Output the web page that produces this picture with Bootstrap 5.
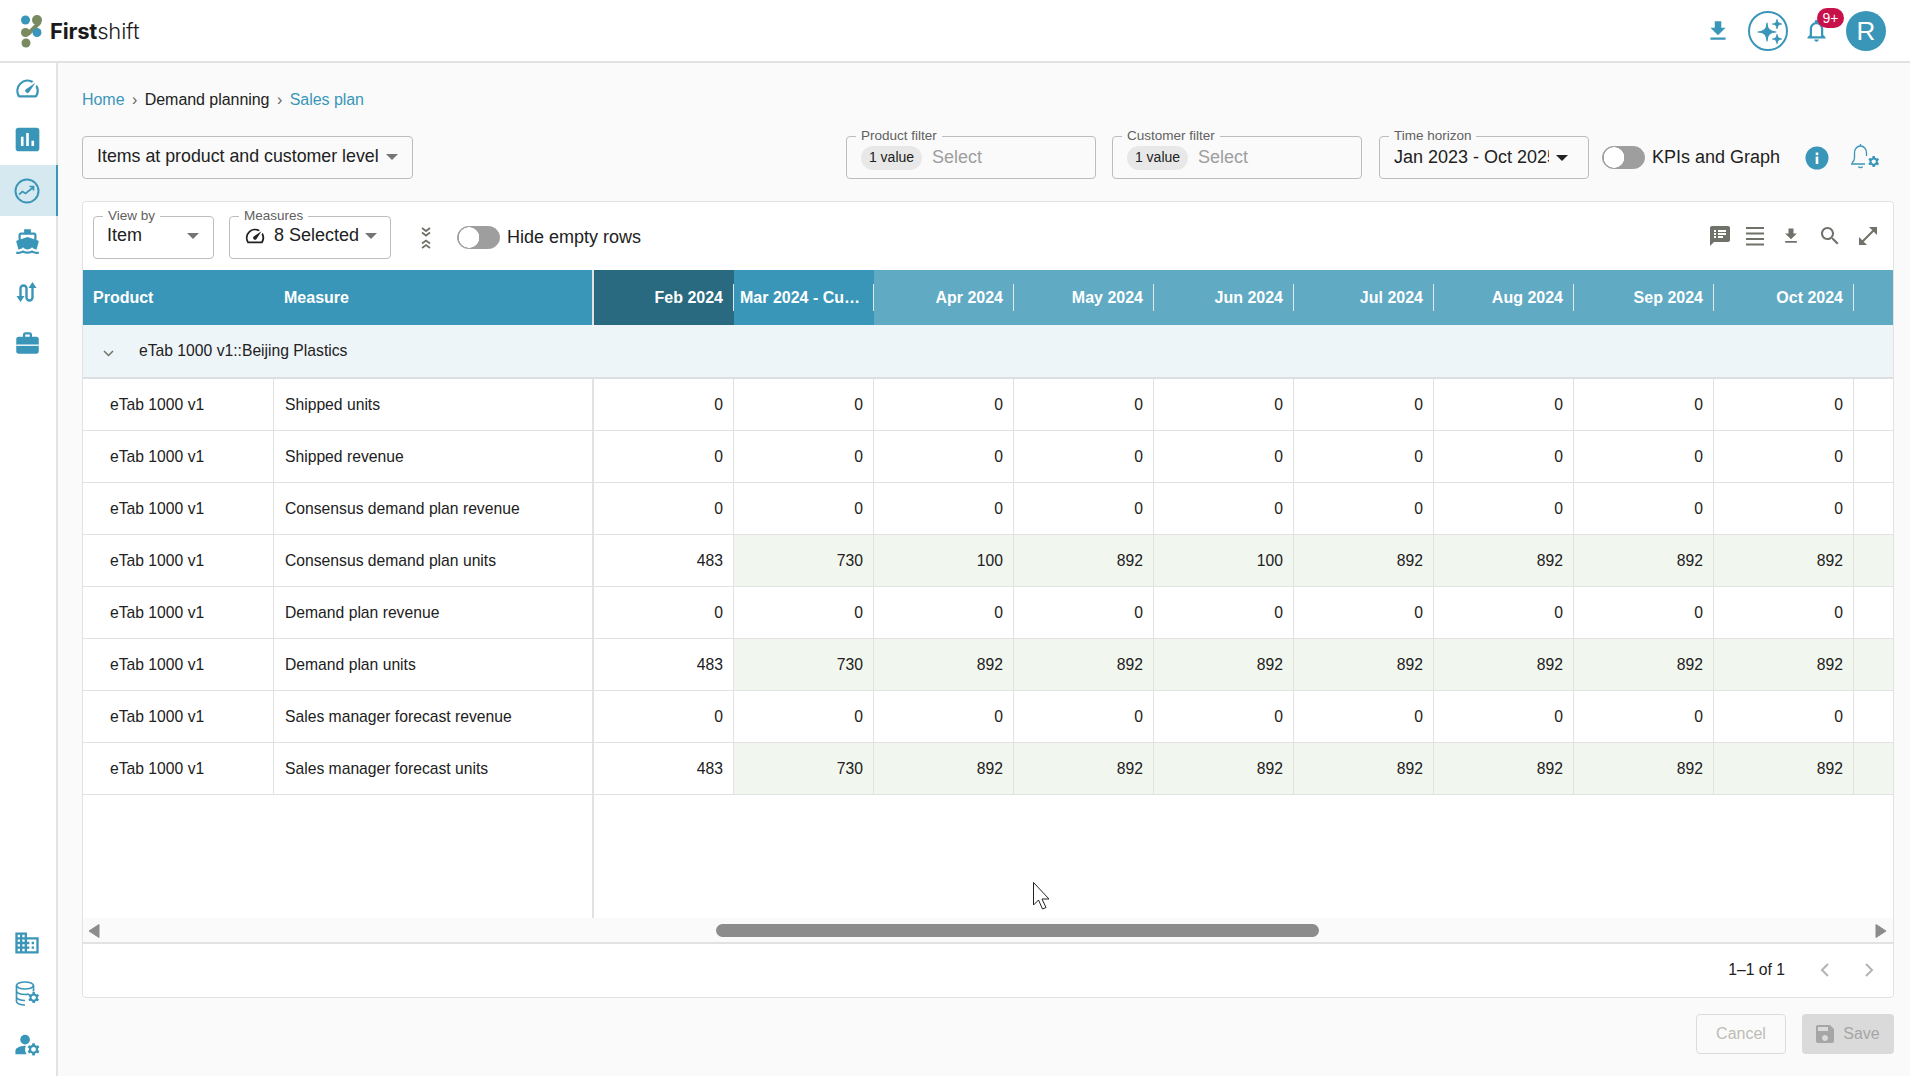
<!doctype html>
<html lang="en">
<head>
<meta charset="utf-8">
<title>Sales plan</title>
<link href="https://cdn.jsdelivr.net/npm/bootstrap@5.3.0/dist/css/bootstrap.min.css" rel="stylesheet">
<style>
html,body{height:100%;overflow:hidden}
body{font-family:"Liberation Sans",Arial,sans-serif;font-size:16px;color:#212121;background:#fafafa;display:flex;flex-direction:column}
.ico{fill:#3a96b8;display:block}
.ico-gray{fill:#6f7268;display:block}
.topbar{height:63px;flex:none;background:#fff;border-bottom:2px solid #e2e2e2;padding:0 24px 0 20px}
.brand{font-family:Inter,"Liberation Sans",sans-serif;font-size:22px;color:#1a1a1a;letter-spacing:-.2px;line-height:1;font-weight:300}
.brand b{font-weight:700}
.bell-wrap{position:relative;width:42px;height:40px;margin:0}
.bell-count{position:absolute;left:13px;top:-3px;width:27px;height:20px;border-radius:10px;background:#c8104b;color:#fff;font-size:14px;line-height:20px;text-align:center}
.avatar{width:40px;height:40px;border-radius:50%;background:#3a96b8;color:#fff;font-size:26px;line-height:40px;text-align:center}
.rail{width:58px;flex:none;background:#fff;border-right:2px solid #e2e2e2}
.rail-item{height:51px;display:flex;align-items:center;justify-content:center;width:56px;padding-right:2px}
.rail-item.on{background:#d6e9f0;box-shadow:2px 0 0 #3a96b8}
.workspace{flex:1;min-width:0;padding:25px 16px 23px 24px}
.crumbs{line-height:24px;margin:0 0 24px;font-size:16px;letter-spacing:-.05px;--bs-breadcrumb-divider:"›";--bs-breadcrumb-margin-bottom:24px}
.crumbs .breadcrumb-item+.breadcrumb-item{padding-left:7.5px}
.crumbs .breadcrumb-item+.breadcrumb-item::before{padding-right:7.5px;color:#666}
.crumbs a,.crumbs .active{color:#3a96b8;text-decoration:none}
.crumbs .mid{color:#212121}
.level-btn{height:43px;width:331px;background:#fafafa;border:1px solid #bdbdbd;border-radius:4px;color:#212121;font-size:17.8px;padding:0 14px 2px;text-align:left;white-space:nowrap;display:flex;align-items:center;justify-content:space-between}
.level-btn:hover{background:#fafafa;color:#212121;border-color:#bdbdbd}
.dropdown-toggle::after{border-top:.36em solid #757575;border-right:.36em solid transparent;border-left:.36em solid transparent;border-bottom:0;vertical-align:middle;margin-left:6px}
.fbox{position:relative;height:43px;border:1px solid #bdbdbd;border-radius:4px;display:flex;align-items:center;padding:0 14px}
.fbox>label{position:absolute;left:9px;top:-9px;font-size:13.5px;line-height:16px;color:#616161;padding:0 5px;background:#fafafa;white-space:nowrap}
.card-tool .fbox>label{background:#fff}
.chip{background:#e8e8e8;border-radius:12px;height:24px;line-height:23px;padding:0 8px;font-size:14px;margin-right:10px;white-space:nowrap}
.hint{color:#9e9e9e;font-size:18px}
.w-filter{width:250px}
.w-time{width:210px;font-size:18px;justify-content:space-between;white-space:nowrap}
.w-time span{width:155px;overflow:hidden;display:block}
.w-time.dropdown-toggle::after{border-top-color:#212121;margin-right:6px}
.sw{margin:0;min-height:0;padding:0;display:flex;align-items:center}
.sw .form-check-input{margin:0;width:43px;height:23px;border-radius:12px;border:1px solid #9e9e9e;background-color:#9e9e9e;background-image:radial-gradient(circle at 11px 50%,#fff 10px,transparent 10.5px);background-position:0 0;box-shadow:none}
.sw label{margin-left:7px;font-size:18px;white-space:nowrap}
.sheet{flex:1;min-height:0;border:1px solid #e2e2e2;border-radius:4px;background:#fff;margin-top:22px;display:flex;flex-direction:column;overflow:hidden}
.card-tool{height:68px;flex:none;padding:14px 10px 0 10px}
.w-view{width:121px;font-size:18px;padding:0 14px 4px 13px;justify-content:space-between}
.w-meas{width:162px;font-size:18px;padding-bottom:4px;justify-content:space-between}
.w-view.dropdown-toggle::after{margin-right:0}
.w-meas.dropdown-toggle::after{margin-right:2px}
.tools{margin-left:auto;padding-right:3px}
.grid-wrap{flex:none;overflow:hidden}
.plan{table-layout:fixed;width:1811px;border-collapse:separate;border-spacing:0;margin:0;font-size:15.7px;--bs-table-bg:transparent;--bs-table-color:#212121;--bs-table-border-color:transparent}
.plan>:not(caption)>*>*{padding:0 10px;vertical-align:middle;border-width:0}
.plan thead th{height:55px;color:#fff;font-size:16px;font-weight:700;background:#3a96b8;position:relative;white-space:nowrap;text-align:right;padding-right:11px}
.plan thead th.lft{text-align:left;padding-left:10px}
.plan thead th.past{background:#296a80}
.plan thead th.later{background:#60aac4}
.plan thead th.sep::after{content:"";position:absolute;right:0;top:14px;height:27px;width:1px;background:#dfe9ed}
.plan thead th.edge{border-right:2px solid #e2e2e2}
.plan .grp td{height:54px;background:#eef5f8;border-bottom:2px solid #dcdfe0;font-size:15.7px;padding-left:19px}
.plan .grp svg{display:inline-block;vertical-align:-3px;margin-right:24px}
.plan tbody .r td{height:52px;border-bottom:1px solid #e2e2e2;border-right:1px solid #e2e2e2;text-align:right}
.plan tbody .r td:nth-child(1){text-align:left;padding-left:27px}
.plan tbody .r td:nth-child(2){text-align:left;padding-left:11px;border-right:2px solid #e2e2e2}
.plan tbody .r td:last-child{border-right:0}
.plan tbody .r td.g{background:#f1f6ef}
.grid-rest{flex:1;min-height:0;position:relative}
.grid-rest>div{width:511px;height:100%;border-right:2px solid #e2e2e2}
.hscroll{height:24px;flex:none;background:#fafafa;position:relative;border-bottom:0}
.thumb{position:absolute;left:633px;top:6px;width:603px;height:13px;border-radius:7px;background:#8c8c8c}
.arrow-l{position:absolute;left:5px;top:6px}
.arrow-r{position:absolute;right:6px;top:6px}
.pager{height:55px;flex:none;border-top:2px solid #e2e2e2;padding:0 17px 2px 0;font-size:15.7px}
.pager span{margin-right:33px}
.pager svg+svg{margin-left:30px}
.acts{margin-top:16px;height:39px}
.btn-off{height:40px;border-radius:4px;font-size:16px;padding:0;display:flex;align-items:center;justify-content:center}
.btn-off.c{width:90px;border:1px solid #dcdcdc;color:#bdbdb5;background:transparent}
.btn-off.s{width:92px;border:0;background:#dadada;color:#a6a6a6;gap:9px}
.btn-off:disabled{opacity:1}
.btn-off.c:disabled{color:#bdbdb5;border-color:#dcdcdc;background:transparent}
.btn-off.s:disabled{color:#a6a6a6;background:#dadada}
.pointer{position:absolute;left:1033px;top:882px;z-index:5;pointer-events:none}
</style>
</head>
<body>
<svg width="0" height="0" class="position-absolute">
<symbol id="gear" viewBox="0 0 24 24"><path d="M20.75 16c0-.22-.03-.42-.06-.63l1.14-1.01-1-1.73-1.45.49c-.32-.27-.68-.48-1.08-.63L18 11h-2l-.3 1.49c-.4.15-.76.36-1.08.63l-1.45-.49-1 1.73 1.14 1.01c-.03.21-.06.41-.06.63s.03.42.06.63l-1.14 1.01 1 1.73 1.45-.49c.32.27.68.48 1.08.63L16 21h2l.3-1.49c.4-.15.76-.36 1.08-.63l1.45.49 1-1.73-1.14-1.01c.03-.21.06-.41.06-.63zM17 18c-1.1 0-2-.9-2-2s.9-2 2-2 2 .9 2 2-.9 2-2 2z"/></symbol>
<symbol id="dl" viewBox="0 0 24 24"><path d="M19 9h-4V3H9v6H5l7 7 7-7zM5 18v2h14v-2H5z"/></symbol>
<symbol id="speed" viewBox="0 0 24 24"><path d="M20.38 8.57l-1.23 1.85a8 8 0 0 1-.22 7.58H5.07A8 8 0 0 1 15.58 6.85l1.85-1.23A10 10 0 0 0 3.35 19a2 2 0 0 0 1.72 1h13.85a2 2 0 0 0 1.74-1 10 10 0 0 0-.27-10.44zm-9.79 6.84a2 2 0 0 0 2.83 0l5.66-8.49-8.49 5.66a2 2 0 0 0 0 2.83z"/></symbol>
</svg>
<svg class="pointer" width="20" height="28" viewBox="0 0 20 28"><path d="M.5.5V23l5-5 4 9 3.5-1.5-4-8.500h7z" fill="#fff" stroke="#222" stroke-width="1"/></svg>

<nav class="navbar topbar d-flex align-items-center justify-content-between flex-nowrap">
  <a class="d-flex align-items-center text-decoration-none" href="#">
    <svg width="26" height="34" viewBox="0 0 26 34">
      <path d="M8 20 L20 8" stroke="#7a8a60" stroke-width="4"/>
      <circle cx="5.500" cy="6" r="4.500" fill="#3a96b8"/>
      <circle cx="17" cy="6" r="5" fill="#7a8a60"/>
      <circle cx="5.500" cy="18.500" r="4.500" fill="#7a8a60"/>
      <circle cx="17" cy="18.500" r="4.500" fill="#3a96b8"/>
      <circle cx="6" cy="29" r="4.500" fill="#7a8a60"/>
    </svg>
    <span class="brand ms-1"><b>First</b>shift</span>
  </a>
  <div class="d-flex align-items-center">
    <svg class="ico" style="margin-right:17px" width="26" height="26" viewBox="0 0 24 24"><use href="#dl"/></svg>
    <svg width="40" height="40" viewBox="0 0 40 40"><circle cx="20" cy="20" r="19" fill="none" stroke="#3a96b8" stroke-width="2"/><path fill="#3a96b8" d="M19 12Q19 21 28 21Q19 21 19 30Q19 21 10 21Q19 21 19 12ZM29 8.500Q29 13 33.500 13Q29 13 29 17.500Q29 13 24.500 13Q29 13 29 8.500ZM29 23.500Q29 28 33.500 28Q29 28 29 32.500Q29 28 24.500 28Q29 28 29 23.500Z" stroke="#3a96b8" stroke-width="1.200" stroke-linejoin="round"/></svg>
    <div class="bell-wrap d-flex align-items-center" style="margin-left:16px">
      <svg class="ico" width="27" height="27" viewBox="0 0 24 24" style="margin-left:-1px"><path d="M12 22c1.100 0 2-.9 2-2h-4c0 1.100.9 2 2 2zm6-6v-5c0-3.070-1.630-5.640-4.500-6.320V4c0-.83-.67-1.500-1.500-1.500s-1.500.67-1.500 1.500v.68C7.640 5.360 6 7.920 6 11v5l-2 2v1h16v-1l-2-2zm-2 1H8v-6c0-2.480 1.510-4.500 4-4.500s4 2.020 4 4.500v6z"/></svg>
      <span class="bell-count">9+</span>
    </div>
    <div class="avatar">R</div>
  </div>
</nav>

<div class="d-flex flex-grow-1" style="min-height:0">
  <aside class="rail d-flex flex-column">
    <div class="rail-item"><svg class="ico" width="27" height="27" viewBox="0 0 24 24"><use href="#speed"/></svg></div>
    <div class="rail-item"><svg class="ico" width="25" height="25" viewBox="2.500 2.500 19 19"><path d="M19 3H5c-1.100 0-2 .9-2 2v14c0 1.100.9 2 2 2h14c1.100 0 2-.9 2-2V5c0-1.100-.9-2-2-2zM9 17H7v-7h2v7zm4 0h-2V7h2v10zm4 0h-2v-4h2v4z"/></svg></div>
    <div class="rail-item on"><svg width="26" height="26" viewBox="0 0 26 26" fill="none" stroke="#3a96b8" stroke-width="2"><circle cx="13" cy="13" r="11.500"/><path d="M5 16.500l3.500-3 3 2 7.500-6M15.500 8.500h4v4" stroke-width="1.700"/></svg></div>
    <div class="rail-item"><svg class="ico" width="27" height="27" viewBox="0 0 24 24"><path d="M20 21c-1.390 0-2.780-.47-4-1.320-2.440 1.710-5.560 1.710-8 0C6.780 20.530 5.390 21 4 21H2v2h2c1.380 0 2.740-.35 4-.99 2.520 1.290 5.480 1.290 8 0 1.260.65 2.620.99 4 .99h2v-2h-2zM3.950 19H4c1.600 0 3.020-.88 4-2 .98 1.120 2.400 2 4 2s3.020-.88 4-2c.98 1.120 2.400 2 4 2h.05l1.890-6.680c.08-.26.06-.54-.06-.78s-.34-.42-.6-.5L20 10.620V6c0-1.100-.9-2-2-2h-3V1H9v3H6c-1.100 0-2 .9-2 2v4.620l-1.290.42c-.26.08-.48.26-.6.5s-.15.52-.06.78L3.950 19zM6 6h12v3.970L12 8 6 9.970V6z"/></svg></div>
    <div class="rail-item"><svg width="24" height="24" viewBox="-1 0 24 24" fill="none" stroke="#3a96b8" stroke-width="2.400"><path d="M4.500 16V7.500a3 3 0 0 1 6 0v9a3 3 0 0 0 6 0V6"/><path d="M.5 15h8l-4 6zM12.500 7h8l-4-6z" fill="#3a96b8" stroke="none"/></svg></div>
    <div class="rail-item"><svg class="ico" width="27" height="27" viewBox="0 0 24 24"><path d="M20 6h-4V4c0-1.110-.89-2-2-2h-4c-1.110 0-2 .89-2 2v2H4c-1.110 0-1.990.89-1.990 2L2 19c0 1.110.89 2 2 2h16c1.110 0 2-.89 2-2V8c0-1.110-.89-2-2-2zm-6 0h-4V4h4v2z"/><path d="M2 13.500h20" stroke="#fff" stroke-width="1.200"/></svg></div>
    <div class="mt-auto"></div>
    <div class="rail-item"><svg class="ico" width="28" height="28" viewBox="0 0 24 24"><path d="M12 7V3H2v18h20V7H12zM6 19H4v-2h2v2zm0-4H4v-2h2v2zm0-4H4V9h2v2zm0-4H4V5h2v2zm4 12H8v-2h2v2zm0-4H8v-2h2v2zm0-4H8V9h2v2zm0-4H8V5h2v2zm10 12h-8v-2h2v-2h-2v-2h2v-2h-2V9h8v10zm-2-8h-2v2h2v-2zm0 4h-2v2h2v-2z"/></svg></div>
    <div class="rail-item"><svg width="28" height="27" viewBox="-1 0 28 27"><g fill="none" stroke="#3a96b8" stroke-width="1.700"><ellipse cx="11" cy="5.500" rx="8.500" ry="3.500"/><path d="M2.500 5.500v16c0 2 4 3.500 8.500 3.500M2.500 11c0 2 4 3.500 8.500 3.500 1.500 0 3-.2 4-.5M2.500 17c0 2 4 3.500 8.500 3.500M19.500 5.500v6"/></g><g fill="#3a96b8"><use href="#gear" x="1" y="0" width="26.400" height="26.400"/></g></svg></div>
    <div class="rail-item" style="margin-bottom:6px"><svg class="ico" width="29" height="29" viewBox="0 0 24 24"><circle cx="10" cy="8" r="4"/><path d="M10.670 13.020c-.22-.01-.44-.02-.67-.02-2.420 0-4.680.67-6.610 1.820-.88.52-1.390 1.500-1.390 2.530V20h9.260c-.79-1.130-1.260-2.510-1.260-4 0-1.070.25-2.070.67-2.980z"/><use href="#gear"/></svg></div>
  </aside>

  <main class="workspace d-flex flex-column">
    <ol class="breadcrumb crumbs">
      <li class="breadcrumb-item"><a href="#">Home</a></li>
      <li class="breadcrumb-item mid">Demand planning</li>
      <li class="breadcrumb-item active">Sales plan</li>
    </ol>

    <div class="d-flex align-items-center">
      <button class="btn dropdown-toggle level-btn" type="button">Items at product and customer level</button>
      <div class="d-flex align-items-center ms-auto">
        <div class="fbox w-filter"><label>Product filter</label><span class="chip">1 value</span><span class="hint">Select</span></div>
        <div class="fbox w-filter" style="margin-left:16px"><label>Customer filter</label><span class="chip">1 value</span><span class="hint">Select</span></div>
        <div class="fbox w-time dropdown-toggle" style="margin-left:17px"><label>Time horizon</label><span>Jan 2023 - Oct 2025</span></div>
        <div class="form-check form-switch sw" style="margin-left:13px"><input class="form-check-input" type="checkbox" id="kpi"><label for="kpi">KPIs and Graph</label></div>
        <svg style="margin-left:25px" width="24" height="24" viewBox="0 0 24 24"><circle cx="12" cy="12" r="11.500" fill="#3a96b8"/><rect x="10.700" y="10.500" width="2.600" height="7.500" fill="#fff"/><rect x="10.700" y="6.500" width="2.600" height="2.600" fill="#fff"/></svg>
        <svg style="margin-left:20px;margin-right:13px" width="32" height="32" viewBox="0 0 32 32"><g fill="none" stroke="#3a96b8" stroke-width="1.300"><path d="M3 21c1.500-1.500 2.500-2.500 2.500-5v-5c0-4 2.500-7 6-7s6 3 6 7v3M2 22h14M9.500 24.500c.5 1.500 3.500 1.500 4 0M11.500 4V2"/></g><g fill="#3a96b8"><use href="#gear" x="6" y="2" width="26.400" height="26.400"/></g></svg>
      </div>
    </div>

    <section class="card sheet">
      <div class="card-tool d-flex align-items-start">
        <div class="fbox w-view dropdown-toggle"><label>View by</label><span>Item</span></div>
        <div class="fbox w-meas dropdown-toggle" style="margin-left:15px"><label>Measures</label><span class="d-flex align-items-center gap-2"><svg width="22" height="22" viewBox="0 0 24 24" fill="#212121"><use href="#speed"/></svg>8 Selected</span></div>
        <svg style="margin:11px 0 0 28px" width="14" height="22" viewBox="0 0 14 22" fill="none" stroke="#6f7268" stroke-width="1.800"><path d="M3 1l4 3L11 1M3 5.500l4 3 4-3M3 16.500l4-3 4 3M3 21l4-3 4 3"/></svg>
        <div class="form-check form-switch sw" style="margin:7px 0 0 24px;height:28px"><input class="form-check-input" type="checkbox" id="hide"><label for="hide">Hide empty rows</label></div>
        <div class="tools d-flex align-items-center" style="margin-top:8px">
          <svg class="ico-gray" width="24" height="24" viewBox="0 0 24 24"><path d="M20 2H4c-1.100 0-1.990.9-1.990 2L2 22l4-4h14c1.100 0 2-.9 2-2V4c0-1.100-.9-2-2-2zM8 14H6v-2h2v2zm0-3H6V9h2v2zm0-3H6V6h2v2zm7 6h-5v-2h5v2zm3-3h-8V9h8v2zm0-3h-8V6h8v2z"/></svg>
          <svg style="margin-left:14px" width="18" height="20" viewBox="0 0 18 20" fill="#6f7268"><rect y="1" width="18" height="2"/><rect y="6.500" width="18" height="2"/><rect y="12" width="18" height="2"/><rect y="17.500" width="18" height="2"/></svg>
          <svg class="ico-gray" style="margin-left:17px" width="20" height="20" viewBox="0 0 24 24"><use href="#dl"/></svg>
          <svg class="ico-gray" style="margin-left:17px" width="24" height="24" viewBox="0 0 24 24"><path d="M15.500 14h-.79l-.28-.27C15.410 12.590 16 11.110 16 9.500 16 5.910 13.090 3 9.500 3S3 5.910 3 9.500 5.910 16 9.500 16c1.610 0 3.090-.59 4.230-1.570l.27.28v.79l5 4.990L20.490 19l-4.990-5zm-6 0C7.010 14 5 11.990 5 9.500S7.010 5 9.500 5 14 7.010 14 9.500 11.990 14 9.500 14z"/></svg>
          <svg class="ico-gray" style="margin-left:14px" width="24" height="24" viewBox="0 0 24 24"><path d="M21 11V3h-8l3.290 3.290-10 10L3 13v8h8l-3.290-3.290 10-10z"/></svg>
        </div>
      </div>

      <div class="grid-wrap">
        <table class="table plan">
          <colgroup><col style="width:191px"><col style="width:320px"><col style="width:140px"><col style="width:140px"><col style="width:140px"><col style="width:140px"><col style="width:140px"><col style="width:140px"><col style="width:140px"><col style="width:140px"><col style="width:140px"><col style="width:40px"></colgroup>
          <thead><tr>
            <th class="lft">Product</th><th class="lft edge">Measure</th>
            <th class="past sep">Feb 2024</th>
            <th class="sep lft" style="padding:0 6px">Mar 2024 - Cu…</th>
            <th class="later sep">Apr 2024</th><th class="later sep">May 2024</th><th class="later sep">Jun 2024</th><th class="later sep">Jul 2024</th><th class="later sep">Aug 2024</th><th class="later sep">Sep 2024</th><th class="later sep">Oct 2024</th><th class="later"></th>
          </tr></thead>
          <tbody>
            <tr class="grp"><td colspan="12"><svg width="13" height="12" viewBox="0 0 13 12" fill="none" stroke="#6f7268" stroke-width="1.500"><path d="M2 4l4.500 4.500L11 4"/></svg>eTab 1000 v1::Beijing Plastics</td></tr>
            <tr class="r"><td>eTab 1000 v1</td><td>Shipped units</td><td>0</td><td>0</td><td>0</td><td>0</td><td>0</td><td>0</td><td>0</td><td>0</td><td>0</td><td></td></tr>
            <tr class="r"><td>eTab 1000 v1</td><td>Shipped revenue</td><td>0</td><td>0</td><td>0</td><td>0</td><td>0</td><td>0</td><td>0</td><td>0</td><td>0</td><td></td></tr>
            <tr class="r"><td>eTab 1000 v1</td><td>Consensus demand plan revenue</td><td>0</td><td>0</td><td>0</td><td>0</td><td>0</td><td>0</td><td>0</td><td>0</td><td>0</td><td></td></tr>
            <tr class="r"><td>eTab 1000 v1</td><td>Consensus demand plan units</td><td>483</td><td class="g">730</td><td class="g">100</td><td class="g">892</td><td class="g">100</td><td class="g">892</td><td class="g">892</td><td class="g">892</td><td class="g">892</td><td class="g"></td></tr>
            <tr class="r"><td>eTab 1000 v1</td><td>Demand plan revenue</td><td>0</td><td>0</td><td>0</td><td>0</td><td>0</td><td>0</td><td>0</td><td>0</td><td>0</td><td></td></tr>
            <tr class="r"><td>eTab 1000 v1</td><td>Demand plan units</td><td>483</td><td class="g">730</td><td class="g">892</td><td class="g">892</td><td class="g">892</td><td class="g">892</td><td class="g">892</td><td class="g">892</td><td class="g">892</td><td class="g"></td></tr>
            <tr class="r"><td>eTab 1000 v1</td><td>Sales manager forecast revenue</td><td>0</td><td>0</td><td>0</td><td>0</td><td>0</td><td>0</td><td>0</td><td>0</td><td>0</td><td></td></tr>
            <tr class="r"><td>eTab 1000 v1</td><td>Sales manager forecast units</td><td>483</td><td class="g">730</td><td class="g">892</td><td class="g">892</td><td class="g">892</td><td class="g">892</td><td class="g">892</td><td class="g">892</td><td class="g">892</td><td class="g"></td></tr>
          </tbody>
        </table>
      </div>
      <div class="grid-rest"><div></div></div>
      <div class="hscroll">
        <svg class="arrow-l" width="12" height="14" viewBox="0 0 12 14"><path d="M11 .5v13L1 7z" fill="#8c8c8c" stroke="#8c8c8c" stroke-linejoin="round"/></svg>
        <div class="thumb"></div>
        <svg class="arrow-r" width="12" height="14" viewBox="0 0 12 14"><path d="M1 .5v13L11 7z" fill="#8c8c8c" stroke="#8c8c8c" stroke-linejoin="round"/></svg>
      </div>
      <div class="pager d-flex align-items-center justify-content-end">
        <span>1–1 of 1</span>
        <svg width="14" height="16" viewBox="0 0 14 16" fill="none" stroke="#b4b4b4" stroke-width="2"><path d="M10 2L4 8l6 6"/></svg>
        <svg width="14" height="16" viewBox="0 0 14 16" fill="none" stroke="#b4b4b4" stroke-width="2"><path d="M4 2l6 6-6 6"/></svg>
      </div>
    </section>

    <div class="acts d-flex justify-content-end gap-3">
      <button class="btn btn-off c" disabled>Cancel</button>
      <button class="btn btn-off s" disabled><svg width="18" height="18" viewBox="3 3 18 18" fill="#a6a6a6"><path d="M17 3H5c-1.110 0-2 .9-2 2v14c0 1.100.89 2 2 2h14c1.100 0 2-.9 2-2V7l-4-4zm-5 16c-1.660 0-3-1.340-3-3s1.340-3 3-3 3 1.340 3 3-1.340 3-3 3zm3-10H5V5h10v4z"/></svg>Save</button>
    </div>
  </main>
</div>
<script src="https://cdn.jsdelivr.net/npm/bootstrap@5.3.0/dist/js/bootstrap.bundle.min.js"></script>
</body>
</html>
